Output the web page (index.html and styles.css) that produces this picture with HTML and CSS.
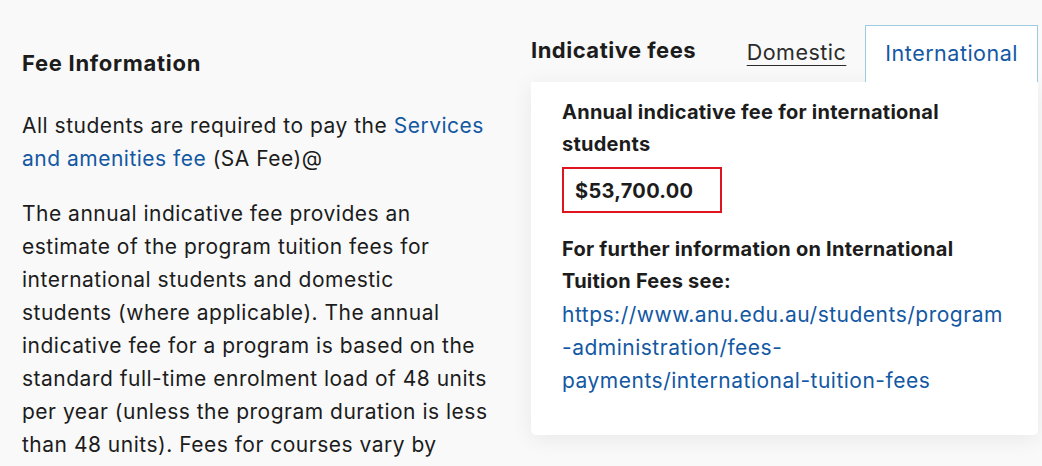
FILE: index.html
```html
<!DOCTYPE html>
<html>
<head>
<meta charset="utf-8">
<link rel="stylesheet" href="styles.css">
</head>
<body>
<div class="page">
  <section class="info">
    <h2 class="info-title">Fee Information</h2>
    <p>All students are required to pay the <a href="#">Services and amenities fee</a> (SA Fee)@</p>
    <p>The annual indicative fee provides an estimate of the program tuition fees for international students and domestic students (where applicable). The annual indicative fee for a program is based on the standard full-time enrolment load of 48 units per year (unless the program duration is less than 48 units). Fees for courses vary by discipline.</p>
  </section>
  <section class="fees">
    <div class="tabs">
      <h2 class="fees-title">Indicative fees</h2>
      <a class="tab" href="#">Domestic</a>
      <a class="tab active" href="#">International</a>
    </div>
    <div class="card">
      <h3 class="card-label">Annual indicative fee for international students</h3>
      <div class="price">$53,700.00</div>
      <h3 class="card-label further">For further information on International Tuition Fees see:</h3>
      <a class="card-link" href="#">https://www.anu.edu.au/students/program<br>-administration/fees-<br>payments/international-tuition-fees</a>
    </div>
  </section>
</div>
</body>
</html>
```
FILE: styles.css
```css
html, body {
  margin: 0;
  padding: 0;
  height: 100%;
  overflow: hidden;
}
body {
  background: #f9f9f9;
  font-family: "Inter", "Liberation Sans", sans-serif;
  color: #1c1c1c;
  font-size: 21px;
  letter-spacing: 0.5px;
  line-height: 33px;
}
.page {
  display: flex;
  align-items: flex-start;
  padding: 25px 0 0 22px;
}
.info {
  width: 466.5px;
  margin-right: 5.5px;
  flex: none;
}
.info-title {
  font-size: 22px;
  font-weight: 700;
  letter-spacing: 0.7px;
  margin: 22px 0 30px;
  line-height: 32px;
}
.info p {
  margin: 0 0 22px;
}
a {
  color: #1358a3;
  text-decoration: none;
}
.fees {
  margin-left: 37px;
  width: 507px;
  flex: none;
}
.tabs {
  display: flex;
  align-items: flex-end;
  height: 57px;
}
.fees-title {
  font-size: 22px;
  font-weight: 700;
  letter-spacing: 0.5px;
  margin: 0;
  align-self: flex-start;
  line-height: 50px;
  flex: 1;
}
.tab {
  color: #2b2b2b;
  font-size: 21.5px;
  text-decoration: underline;
  text-underline-offset: 5px;
  text-decoration-thickness: 1px;
  padding: 0 19px;
  height: 57px;
  line-height: 54px;
  box-sizing: border-box;
}
.tab.active {
  color: #1358a3;
  text-decoration: none;
  background: #fff;
  border: 1px solid #9ccbe2;
  border-bottom: none;
}
.card {
  background: #fff;
  border-radius: 0 0 5px 5px;
  box-shadow: 0 4px 22px rgba(0,0,0,0.07);
  padding: 14px 31px 38px;
}
.card-label {
  font-size: 20px;
  font-weight: 700;
  letter-spacing: 0.25px;
  margin: 0;
  line-height: 32px;
}
.price {
  box-sizing: border-box;
  width: 160px;
  height: 46px;
  border: 2px solid #e0141e;
  font-size: 20px;
  font-weight: 700;
  letter-spacing: 0.3px;
  padding: 6px 0 0 11px;
  line-height: 32px;
  margin: 7px 0 20px;
}
.further {
  line-height: 32px;
}
.card-link {
  display: block;
  margin-top: 1px;
  line-height: 33px;
}
```
